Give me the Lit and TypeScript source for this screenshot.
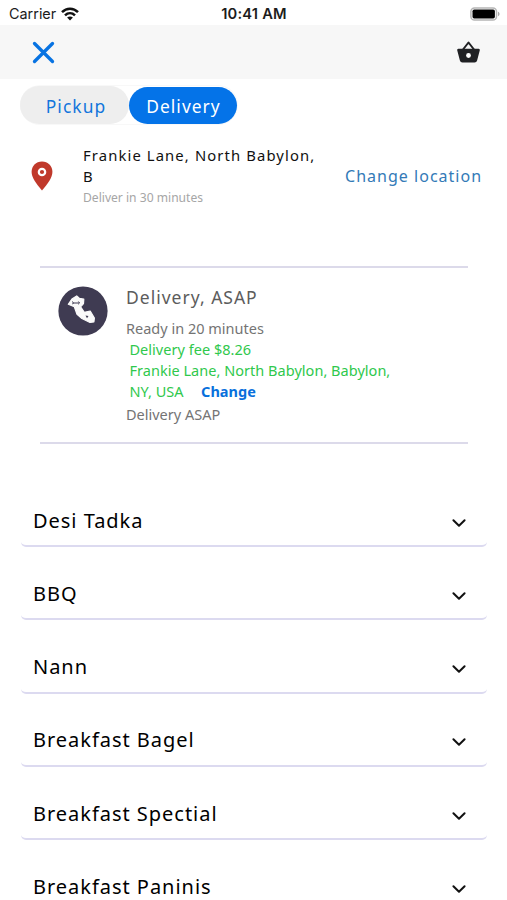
import { LitElement, html, css } from "lit";
import { customElement, property } from "lit/decorators.js";

@customElement("status-bar")
class StatusBar extends LitElement {
  static styles = css`
    :host { display: grid; grid-template-columns: 1fr auto 1fr; align-items: center; height: 25px; box-sizing: border-box; padding: 2px 7px 0 9px; font-family: Inter, sans-serif; color: #1c1c1c; background: #fff; }
    .carrier { display: flex; align-items: center; gap: 5px; font-size: 14.4px; }
    .time { font-size: 14.7px; font-weight: 600; letter-spacing: 0.2px; margin-right: 1px; }
    .battery { justify-self: end; }
    svg { display: block; }
  `;
  render() {
    return html`
      <div class="carrier"><span>Carrier</span>
        <svg width="18" height="14" viewBox="0 0 18 14" fill="none" stroke="#111" stroke-width="2.5">
          <path d="M1 5.2C5.6.6 12.4.6 17 5.2M4 8.3c2.9-2.8 7.1-2.8 10 0"/>
          <path d="M9 13.5 6.1 10.6c1.7-1.5 4.1-1.5 5.8 0z" fill="#111" stroke="none"/>
        </svg>
      </div>
      <div class="time">10:41 AM</div>
      <svg class="battery" width="30" height="14" viewBox="0 0 30 14">
        <rect x=".9" y=".9" width="25.6" height="12.2" rx="3.6" fill="#fff" stroke="#b5b5b5" stroke-width="1.5"/>
        <rect x="2.5" y="2.5" width="22.4" height="9" rx="1.7" fill="#000"/>
        <path d="M28 4.8c2 .7 2 3.7 0 4.4z" fill="#aaa"/>
      </svg>`;
  }
}

@customElement("menu-section")
class MenuSection extends LitElement {
  @property() label = "";
  static styles = css`
    :host { display: flex; align-items: center; justify-content: space-between; box-sizing: border-box; height: 56px; margin-bottom: 17.3px; padding: 4px 20px 0 12px; border-bottom: 2px solid #dcdaf0; border-radius: 5px; }
    .label { font-size: 20px; line-height: 28px; letter-spacing: 0.97px; color: #000; white-space: nowrap; padding-top: 1px; }
    svg { display: block; margin-top: 5px; }
  `;
  render() {
    return html`<span class="label">${this.label}</span>
      <svg width="16" height="12" viewBox="0 0 16 12" fill="none" stroke="#111" stroke-width="2" stroke-linecap="round" stroke-linejoin="round"><path d="m2.4 3.2 5.6 5.6 5.6-5.6"/></svg>`;
  }
}

@customElement("app-root")
class AppRoot extends LitElement {
  static styles = css`
    :host { display: block; height: 900px; overflow: hidden; background: #fff; font-family: "Noto Sans", sans-serif; }
    svg { display: block; }
    header { display: flex; justify-content: space-between; align-items: center; height: 54px; box-sizing: border-box; padding: 0 26px 0 32px; background: #f7f7f7; }
    .switch { display: flex; align-items: center; width: 218px; height: 40px; margin: 6px 0 0 20px; border-radius: 20px; box-shadow: inset 0 0 0 1px #f8f8f8; }
    .tab { display: flex; align-items: center; justify-content: center; box-sizing: border-box; padding-top: 1px; font-size: 17.4px; letter-spacing: 1.05px; }
    .pickup { width: 109px; height: 38px; border-radius: 19px; background: #eee; color: #1275dc; padding-left: 3px; }
    .delivery { width: 108px; height: 37px; border-radius: 19px; background: #0473e8; color: #fff; padding-left: 1px; }
    .address { display: flex; align-items: center; height: 62px; margin-top: 20px; padding: 0 24px 0 31px; }
    .address svg { margin-top: -1px; }
    .place { width: 262px; margin-left: 30px; }
    .street { font-size: 14.8px; line-height: 21px; letter-spacing: 1.12px; color: #111; white-space: nowrap; }
    .eta { font-size: 12.1px; line-height: 20px; margin-top: 1px; color: #a6a6a6; white-space: nowrap; }
    .relocate { font-size: 16px; letter-spacing: 1.02px; color: #337ab7; white-space: nowrap; }
    .order { display: flex; box-sizing: border-box; height: 178px; margin: 59px 39px 0 40px; padding: 18px 0 0 18px; border: solid #dcdaea; border-width: 2px 0; }
    .details { margin-left: 18px; font-size: 14.5px; line-height: 20.9px; color: #747474; white-space: nowrap; }
    .title { font-size: 17.5px; line-height: 24px; letter-spacing: 1px; color: #5c5c5c; margin: -1.500px 0 9.500px; }
    .fee { color: #2fc84c; padding-left: 3.5px; letter-spacing: 0.03px; }
    .change { margin-left: 17.5px; font-weight: 700; color: #0870dc; }
    .asap { margin-top: 2px; }
    .sections { display: block; margin: 47px 20px 0 21px; }
  `;
  sections = ["Desi Tadka", "BBQ", "Nann", "Breakfast Bagel", "Breakfast Spectial", "Breakfast Paninis"];
  render() {
    return html`
      <status-bar></status-bar>
      <header>
        <svg width="23" height="23" viewBox="0 0 23 23" stroke="#0873e2" stroke-width="3.3" stroke-linecap="round"><path d="m2.5 2.5 18 18m0-18-18 18"/></svg>
        <svg width="25" height="23" viewBox="0 0 25 23"><path d="M7 8.500 12.500 1.500l5.500 7" fill="none" stroke="#202124" stroke-width="2" stroke-linejoin="round"/><path d="M2.300 7.800h20.400q1.400 0 1.100 1.500l-2.700 10.300q-.5 2-2.500 2H6.400q-2 0-2.500-2L1.200 9.300Q.9 7.800 2.300 7.800z" fill="#202124"/><circle cx="12.500" cy="14.500" r="2.400" fill="#fff"/></svg>
      </header>
      <div class="switch"><div class="tab pickup">Pickup</div><div class="tab delivery">Delivery</div></div>
      <div class="address">
        <svg width="22" height="30" viewBox="0 0 22 30"><path d="M11 .5C5 .5.6 5 .6 10.800.6 16.500 4.700 22 11 29.500 17.300 22 21.400 16.500 21.400 10.800 21.400 5 17 .5 11 .5z" fill="#c0392b"/><circle cx="11" cy="11" r="3.200" fill="none" stroke="#fff" stroke-width="2.200"/></svg>
        <div class="place">
          <div class="street">Frankie Lane, North Babylon,<br>B</div>
          <div class="eta">Deliver in 30 minutes</div>
        </div>
        <div class="relocate">Change location</div>
      </div>
      <div class="order">
        <svg width="50" height="50" viewBox="0 0 50 50">
          <circle cx="25" cy="25" r="24.600" fill="#3f3b52"/>
          <path d="M10.300 18.300 13.900 13 18.700 9.900 21.300 12.300 25.800 13.200 25.500 17.500 22.600 20.800 26.300 26.300 32.200 25 36.400 32 35.900 36 32 36.500 23.900 32.500 19 28.300 16.300 20.800z" fill="#fafafa" stroke="#fafafa" stroke-width="1.200" stroke-linejoin="round"/>
          <path d="m14 15.500 1.600 1.500-1.400 1m6.200-2.500 1.200 1.500-1.300 1.200M15 17h6" fill="none" stroke="#3f3b52"/>
          <path d="m27.500 29.500 3 .4-1.500 2.300z" fill="#3f3b52"/>
        </svg>
        <div class="details">
          <div class="title">Delivery, ASAP</div>
          <div>Ready in 20 minutes</div>
          <div class="fee">Delivery fee $8.26</div>
          <div class="fee">Frankie Lane, North Babylon, Babylon,</div>
          <div class="fee">NY, USA<span class="change">Change</span></div>
          <div class="asap">Delivery ASAP</div>
        </div>
      </div>
      <div class="sections">${this.sections.map((s) => html`<menu-section .label=${s}></menu-section>`)}</div>`;
  }
}
